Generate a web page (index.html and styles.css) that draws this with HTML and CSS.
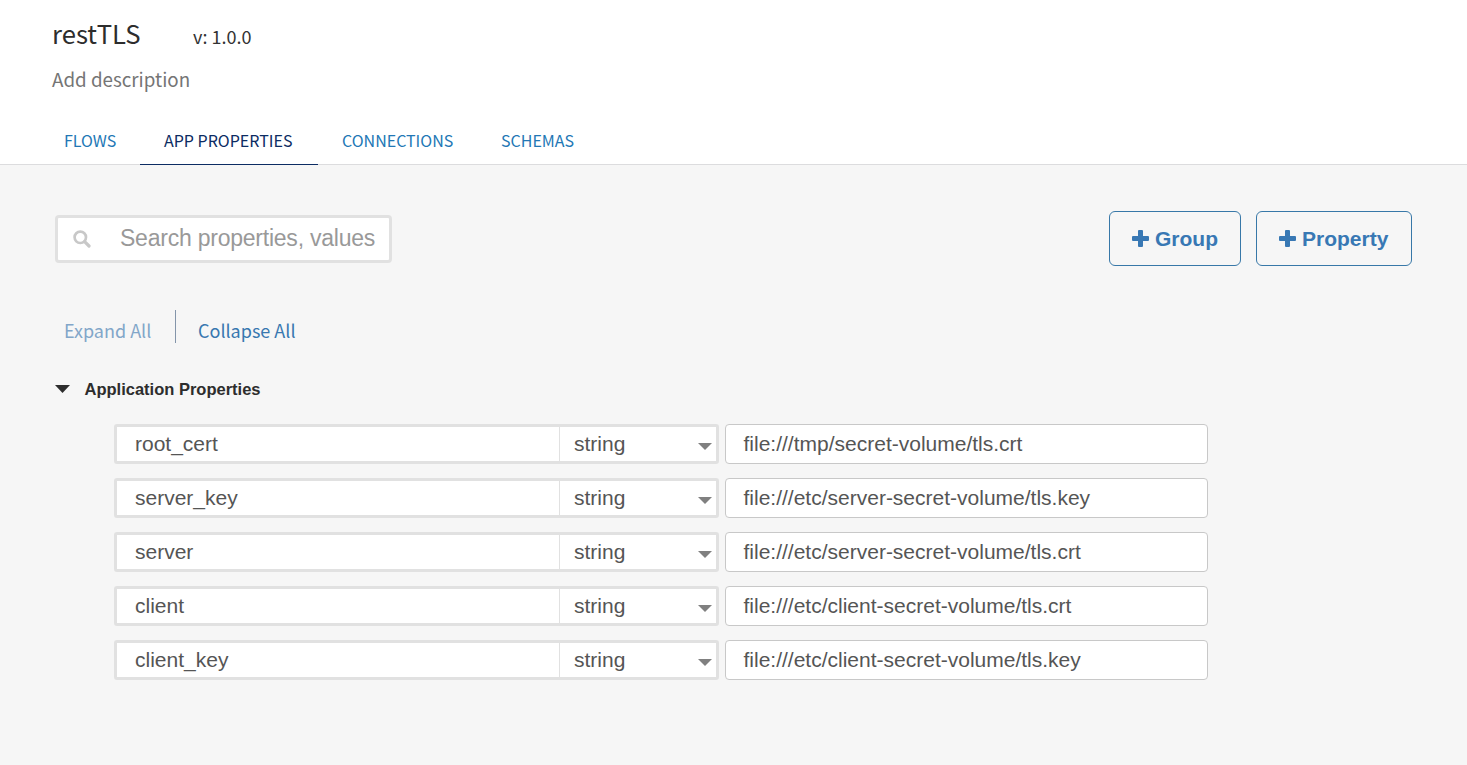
FILE: index.html
```
<!DOCTYPE html>
<html lang="en">
<head>
<meta charset="utf-8">
<title>restTLS</title>
<link rel="stylesheet" href="styles.css">
</head>
<body>
<header class="header">
  <div class="title-row"><h1 class="app-name"><span>restTLS</span></h1><span class="version">v: 1.0.0</span></div>
  <div class="description"><span>Add description</span></div>
  <nav class="tabs">
    <a class="tab tab-flows"><span>FLOWS</span></a>
    <a class="tab tab-props active"><span>APP PROPERTIES</span></a>
    <a class="tab tab-conn"><span>CONNECTIONS</span></a>
    <a class="tab tab-schemas"><span>SCHEMAS</span></a>
  </nav>
</header>
<main class="main">
  <div class="toolbar">
    <div class="search">
      <svg class="search-icon" width="18" height="18" viewBox="0 0 18 18"><circle cx="7.3" cy="7.3" r="5.7" fill="none" stroke="#c8c8c8" stroke-width="2.7"/><path d="M11.6 11.6L16 16" stroke="#c8c8c8" stroke-width="3.2" stroke-linecap="round"/></svg>
      <span class="search-text">Search properties, values</span>
    </div>
    <div class="actions">
      <button class="btn btn-group"><svg width="17" height="17" viewBox="0 0 17 17"><path d="M7 0h3q1 0 1 1v5h5q1 0 1 1v3q0 1-1 1h-5v5q0 1-1 1H7q-1 0-1-1v-5H1q-1 0-1-1V7q0-1 1-1h5V1q0-1 1-1z" fill="#3878b4"/></svg><span>Group</span></button>
      <button class="btn btn-property"><svg width="17" height="17" viewBox="0 0 17 17"><path d="M7 0h3q1 0 1 1v5h5q1 0 1 1v3q0 1-1 1h-5v5q0 1-1 1H7q-1 0-1-1v-5H1q-1 0-1-1V7q0-1 1-1h5V1q0-1 1-1z" fill="#3878b4"/></svg><span>Property</span></button>
    </div>
  </div>
  <div class="toggles"><a class="expand">Expand All</a><i class="divider"></i><a class="collapse">Collapse All</a></div>
  <div class="section"><svg width="15" height="8" viewBox="0 0 15 8"><path d="M0 0h15L7.5 8z" fill="#2d2d2d"/></svg><h2 class="section-title">Application Properties</h2></div>
  <div class="rows">
    <div class="row"><div class="key-box"><div class="key">root_cert</div><div class="type"><span>string</span><svg width="14" height="7" viewBox="0 0 14 7"><path d="M0 0h14L7 7z" fill="#808080"/></svg></div></div><div class="value">file:///tmp/secret-volume/tls.crt</div></div>
    <div class="row"><div class="key-box"><div class="key">server_key</div><div class="type"><span>string</span><svg width="14" height="7" viewBox="0 0 14 7"><path d="M0 0h14L7 7z" fill="#808080"/></svg></div></div><div class="value">file:///etc/server-secret-volume/tls.key</div></div>
    <div class="row"><div class="key-box"><div class="key">server</div><div class="type"><span>string</span><svg width="14" height="7" viewBox="0 0 14 7"><path d="M0 0h14L7 7z" fill="#808080"/></svg></div></div><div class="value">file:///etc/server-secret-volume/tls.crt</div></div>
    <div class="row"><div class="key-box"><div class="key">client</div><div class="type"><span>string</span><svg width="14" height="7" viewBox="0 0 14 7"><path d="M0 0h14L7 7z" fill="#808080"/></svg></div></div><div class="value">file:///etc/client-secret-volume/tls.crt</div></div>
    <div class="row"><div class="key-box"><div class="key">client_key</div><div class="type"><span>string</span><svg width="14" height="7" viewBox="0 0 14 7"><path d="M0 0h14L7 7z" fill="#808080"/></svg></div></div><div class="value">file:///etc/client-secret-volume/tls.key</div></div>
  </div>
</main>
</body>
</html>
```
FILE: styles.css
```
* { box-sizing: border-box; }
body { margin: 0; min-height: 765px; background: #f6f6f6; color: #555; font-family: "Liberation Sans", Arial, sans-serif; font-size: 21px; }
svg { display: block; flex: none; }
.header { height: 165px; background: #fff; border-bottom: 1px solid #dcdcde; font-family: "Noto Sans CJK SC", sans-serif; white-space: nowrap; }
.title-row { display: flex; padding: 14px 0 0 52px; height: 59px; }
.app-name { margin: 0; width: 141px; font-size: 25.7px; font-weight: 400; line-height: 38px; color: #2d2d2d; }
.version { font-size: 18px; line-height: 44px; color: #333; }
.description { height: 40px; padding-left: 52px; font-size: 18.8px; line-height: 40px; color: #757575; }
.tabs { display: flex; height: 66px; padding-left: 41px; font-size: 16px; color: #2277b5; }
.tab { height: 66px; padding: 17px 24px 0; line-height: 48px; }
.tab-flows { width: 99px; padding-left: 23px; }
.tab-props { width: 178px; }
.tab-conn { width: 159px; }
.active { color: #0c2c63; border-bottom: 1px solid #0c2c63; }
.main { padding: 46px 55px 0; }
.toolbar { display: flex; justify-content: space-between; height: 55px; }
.search { display: flex; align-items: center; width: 337px; height: 48px; margin-top: 4px; padding-left: 15px; background: #fff; border: 3px solid #e1e1e1; border-radius: 4px; white-space: nowrap; }
.search-icon { margin-bottom: 1px; }
.search-text { margin: 0 0 2px 29px; font-size: 23px; letter-spacing: -0.23px; line-height: 40px; color: #999; }
.actions { display: flex; gap: 15px; }
.btn { display: flex; align-items: center; height: 55px; padding: 0 0 0 22px; gap: 6px; background: transparent; border: 1px solid #3878a8; border-radius: 6px; color: #3878b4; font: bold 21px "Liberation Sans", Arial, sans-serif; }
.btn svg { margin-bottom: 1px; }
.btn-group { width: 132px; }
.btn-property { width: 156px; }
.toggles { display: flex; height: 33px; margin-top: 44px; padding-left: 9px; font: 18px/40px "Noto Sans CJK SC", sans-serif; color: #3878b0; white-space: nowrap; }
.expand { width: 111px; color: #82a6c9; }
.divider { width: 1px; height: 33px; margin-right: 22px; background: #8495aa; }
.section { display: flex; align-items: center; height: 24px; margin-top: 34px; }
.section-title { margin: 0 0 0 14.5px; font-size: 16.5px; line-height: 24px; color: #2d2d2d; }
.rows { display: grid; gap: 14px; margin: 23px 0 0 59px; }
.row { display: flex; gap: 6px; height: 40px; color: #555; }
.key-box { display: flex; width: 605px; border: 3px solid #e1e1e1; border-radius: 3px; background: #fff; line-height: 34px; }
.key { width: 443px; padding-left: 18px; border-right: 1px solid #e1e1e1; }
.type { flex: 1; display: flex; justify-content: space-between; align-items: center; padding: 0 4px 0 14px; }
.type svg { margin-top: 4px; }
.value { width: 483px; padding-left: 17.5px; border: 1px solid #c8c8c8; border-radius: 4px; background: #fff; line-height: 38px; }
```
